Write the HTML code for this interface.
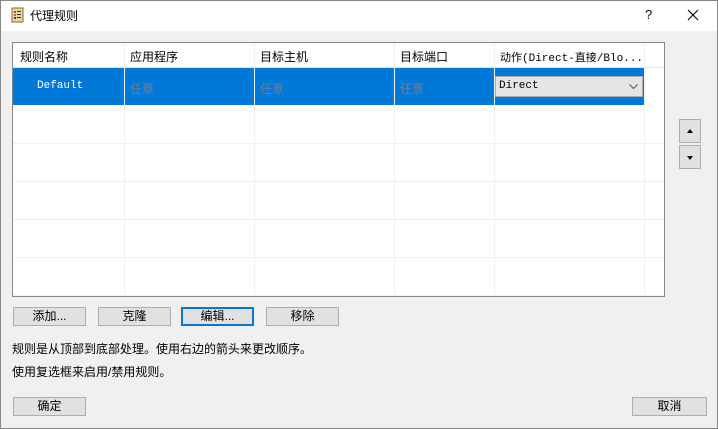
<!DOCTYPE html>
<html><head><meta charset="utf-8"><style>
*{margin:0;padding:0;box-sizing:border-box}
body{width:718px;height:429px;background:#f0f0f0;font-family:"Liberation Sans","Noto Sans CJK SC",sans-serif;font-size:12px;color:#000;position:relative;overflow:hidden}
.frame{position:absolute;left:0;top:0;width:718px;height:429px;border:1px solid #888;pointer-events:none}
.title{position:absolute;left:0;top:0;width:718px;height:31px;background:#fff}
.title .t{position:absolute;left:30px;top:7px;font-size:12px}
.abs{position:absolute}
.tbl{position:absolute;left:12px;top:42px;width:653px;height:255px;background:#fff;border:1px solid #828790}
.vl{position:absolute;top:0;width:1px;height:252px;background:#f0f0f0}
.hl{position:absolute;left:0;width:651px;height:1px;background:#f0f0f0}
.hdr{position:absolute;top:5px;font-size:12px}
.btn{position:absolute;height:19px;background:#e1e1e1;border:1px solid #adadad;text-align:center;line-height:17px;font-size:12px}
.mono{font-family:"Liberation Mono","Noto Sans CJK SC",monospace;font-size:11px}
</style></head><body>
<div class="title">
<svg class="abs" style="left:9px;top:7px" width="16" height="16" viewBox="0 0 16 16"><rect x="3" y="1" width="11" height="14" fill="#e8d6a0" stroke="#8a6a2a"/><rect x="5" y="4" width="2" height="2" fill="#c33"/><rect x="8" y="4" width="4" height="1" fill="#333"/><rect x="5" y="7" width="2" height="2" fill="#3a3"/><rect x="8" y="7" width="4" height="1" fill="#333"/><rect x="5" y="10" width="2" height="2" fill="#33c"/><rect x="8" y="10" width="4" height="1" fill="#333"/></svg>
<div class="t">代理规则</div>
<div class="abs" style="left:645px;top:7px;font-size:13px">?</div>
<svg class="abs" style="left:687px;top:9px" width="12" height="12"><path d="M1 1L11 11M11 1L1 11" stroke="#000" stroke-width="1.1"/></svg>
</div>
<div class="tbl">
<div class="abs" style="left:0;top:25px;width:631px;height:37px;background:#0078d7"></div>
<div class="hl" style="top:24px;background:#e5e5e5"></div>
<div class="hl" style="top:100px"></div><div class="hl" style="top:138px"></div><div class="hl" style="top:176px"></div><div class="hl" style="top:214px"></div><div class="hl" style="top:252px"></div>
<div class="vl" style="left:111px"></div><div class="vl" style="left:241px"></div><div class="vl" style="left:381px"></div><div class="vl" style="left:481px"></div><div class="vl" style="left:631px"></div>
<div class="hdr" style="left:7px">规则名称</div>
<div class="hdr" style="left:117px">应用程序</div>
<div class="hdr" style="left:247px">目标主机</div>
<div class="hdr" style="left:387px">目标端口</div>
<div class="hdr mono" style="left:487px;top:6px">动作(Direct-直接/Blo...</div>
<div class="abs mono" style="left:24px;top:37px;color:#fff">Default</div>
<div class="abs" style="left:117px;top:37px;color:#6b7f99">任意</div>
<div class="abs" style="left:247px;top:37px;color:#6b7f99">任意</div>
<div class="abs" style="left:387px;top:37px;color:#6b7f99">任意</div>
<div class="abs" style="left:482px;top:33px;width:148px;height:21px;background:#e5e5e5;border:1px solid #acacac"></div>
<div class="abs mono" style="left:486px;top:37px">Direct</div>
<svg class="abs" style="left:616px;top:41px" width="9" height="6"><path d="M0.5 0.5L4.5 4.5L8.5 0.5" stroke="#555" fill="none"/></svg>
</div>
<div class="btn" style="left:679px;top:119px;width:22px;height:24px"></div>
<div class="btn" style="left:679px;top:145px;width:22px;height:24px"></div>
<svg class="abs" style="left:687px;top:129px" width="6" height="4"><path d="M0 4L3 0L6 4Z" fill="#000"/></svg>
<svg class="abs" style="left:687px;top:156px" width="6" height="4"><path d="M0 0L3 4L6 0Z" fill="#000"/></svg>
<div class="btn" style="left:13px;top:307px;width:73px">添加...</div>
<div class="btn" style="left:98px;top:307px;width:73px">克隆</div>
<div class="btn" style="left:181px;top:307px;width:73px;border:2px solid #0078d7;line-height:15px">编辑...</div>
<div class="btn" style="left:266px;top:307px;width:73px">移除</div>
<div class="abs" style="left:12px;top:340px">规则是从顶部到底部处理。使用右边的箭头来更改顺序。</div>
<div class="abs" style="left:12px;top:363px">使用复选框来启用/禁用规则。</div>
<div class="btn" style="left:13px;top:397px;width:73px">确定</div>
<div class="btn" style="left:632px;top:397px;width:75px">取消</div>
<div class="frame"></div>
</body></html>
